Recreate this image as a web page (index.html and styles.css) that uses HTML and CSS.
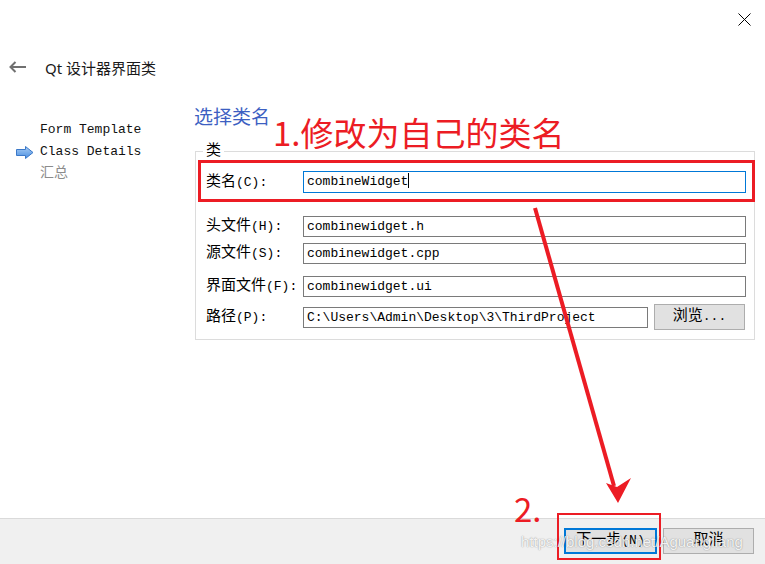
FILE: index.html
```html
<!DOCTYPE html>
<html lang="zh-CN">
<head>
<meta charset="utf-8">
<title>Qt 设计器界面类</title>
<link rel="stylesheet" href="styles.css">
</head>
<body>
<div class="dialog">
  <div class="topbar">
    <svg class="close" width="13" height="13" viewBox="0 0 13 13"><path d="M0.5 0.5L12.5 12.5M12.5 0.5L0.5 12.5" stroke="#000" stroke-width="1" fill="none"/></svg>
  </div>
  <div class="titlebar">
    <svg class="back" width="17" height="12" viewBox="0 0 17 12"><path d="M1.5 6H17M6.5 1L1.5 6L6.5 11" stroke="#707070" stroke-width="2" fill="none"/></svg>
    <span class="title">Qt 设计器界面类</span>
  </div>
  <div class="main">
    <ul class="nav">
      <li class="nav-item">Form Template</li>
      <li class="nav-item current">
        <svg class="cur-arrow" width="18" height="13" viewBox="0 0 18 13">
          <defs><linearGradient id="g" x1="0" y1="0" x2="0" y2="1"><stop offset="0" stop-color="#a9cdf5"/><stop offset="1" stop-color="#4b8fe0"/></linearGradient></defs>
          <path d="M0.5 3.5H9.5V0.5L17 6.5L9.5 12.5V9.5H0.5Z" fill="url(#g)" stroke="#3b78c8" stroke-width="1"/>
        </svg>Class Details</li>
      <li class="nav-item pending"><span class="zh">汇总</span></li>
    </ul>
    <section class="panel">
      <h2 class="heading">选择类名</h2>
      <fieldset class="group">
        <legend class="legend"><span class="zh">类</span></legend>
        <div class="row row-1">
          <label class="lbl"><span class="zh">类名</span>(C):</label>
          <div class="field field-active">combineWidget<span class="caret"></span></div>
        </div>
        <div class="row row-2">
          <label class="lbl"><span class="zh">头文件</span>(H):</label>
          <div class="field">combinewidget.h</div>
        </div>
        <div class="row row-3">
          <label class="lbl"><span class="zh">源文件</span>(S):</label>
          <div class="field">combinewidget.cpp</div>
        </div>
        <div class="row row-4">
          <label class="lbl"><span class="zh">界面文件</span>(F):</label>
          <div class="field">combinewidget.ui</div>
        </div>
        <div class="row row-5">
          <label class="lbl"><span class="zh">路径</span>(P):</label>
          <div class="field field-path">C:\Users\Admin\Desktop\3\ThirdProject</div>
          <button class="btn btn-browse"><span class="zh">浏览</span>...</button>
        </div>
      </fieldset>
    </section>
  </div>
  <div class="footer">
    <button class="btn btn-default"><span class="zh">下一步</span>(N)</button>
    <button class="btn btn-cancel"><span class="zh">取消</span></button>
  </div>

  <div class="mark mark-box1"></div>
  <div class="mark mark-box2"></div>
  <div class="note note-1">1.修改为自己的类名</div>
  <div class="note note-2">2.</div>
  <svg class="arrow" width="765" height="564" viewBox="0 0 765 564">
    <path d="M535 208L614 486" stroke="#ec1c24" stroke-width="4" fill="none"/>
    <path d="M618 503L606 483L617 487L631 478Z" fill="#ec1c24"/>
  </svg>
  <div class="watermark">https://blog.csdn.net/Aguangliang</div>
</div>
</body>
</html>
```

FILE: styles.css
```css
* { box-sizing: border-box; }
html, body { margin: 0; padding: 0; background: #fff; }
body { width: 765px; height: 564px; overflow: hidden; }

.dialog {
  position: relative;
  width: 765px;
  height: 564px;
  display: flex;
  flex-direction: column;
  background: #fff;
  font-family: "Liberation Mono", "Noto Sans CJK SC", monospace;
  font-size: 13px;
  color: #000;
}

.zh { font-family: "Noto Sans CJK SC", sans-serif; font-size: 15px; line-height: 1; }

.topbar {
  height: 40px;
  display: flex;
  justify-content: flex-end;
  align-items: flex-start;
  padding: 13px 14px 0 0;
}

.titlebar {
  height: 54px;
  display: flex;
  align-items: center;
  padding-left: 9px;
}
.back { margin-right: 19px; }
.title {
  font-family: "Noto Sans", "Noto Sans CJK SC", sans-serif;
  font-size: 15px;
  color: #1a1a1a;
}

.main {
  flex: 1;
  display: flex;
}

.nav {
  list-style: none;
  margin: 25px 0 0 0;
  padding: 0;
  width: 194px;
}
.nav-item {
  height: 22px;
  line-height: 22px;
  padding-left: 40px;
  position: relative;
  white-space: nowrap;
  color: #111;
}
.cur-arrow { position: absolute; left: 16px; top: 5px; }
.pending { color: #8c8c8c; }
.pending .zh { font-size: 14px; }

.panel { width: 561px; }
.heading {
  margin: 10px 0 0 0;
  font-family: "Noto Sans CJK SC", sans-serif;
  font-weight: normal;
  font-size: 19px;
  line-height: 24px;
  color: #3d5fc2;
}

.group {
  margin: 13px 0 0 1px;
  padding: 0 8px 9px 10px;
  border: 1px solid #dcdcdc;
  min-width: 0;
}
.legend {
  padding: 0 3px;
  margin-left: -3px;
  line-height: 18px;
}

.row {
  display: flex;
  align-items: center;
  height: 21px;
}
.row-1 { margin-top: 10px; height: 22px; }
.row-2 { margin-top: 23px; }
.row-3 { margin-top: 6px; }
.row-4 { margin-top: 12px; }
.row-5 { margin-top: 7px; height: 26px; }

.lbl {
  width: 97px;
  white-space: nowrap;
  line-height: 21px;
  height: 21px;
}

.field {
  width: 443px;
  height: 21px;
  border: 1px solid #7a7a7a;
  padding-left: 3px;
  line-height: 19px;
  white-space: nowrap;
  overflow: hidden;
}
.field-active { height: 22px; border-color: #0078d7; line-height: 20px; }
.caret {
  display: inline-block;
  width: 1px;
  height: 15px;
  background: #000;
  vertical-align: -3px;
}
.field-path { width: 345px; }

.btn {
  font-family: "Liberation Mono", "Noto Sans CJK SC", monospace;
  font-size: 13px;
  color: #000;
  background: #e1e1e1;
  border: 1px solid #adadad;
  height: 26px;
  padding: 0;
  line-height: 24px;
}
.btn-browse { width: 91px; margin-left: 6px; }

.footer {
  height: 46px;
  background: #f0f0f0;
  border-top: 1px solid #dadada;
  display: flex;
  justify-content: flex-end;
  align-items: flex-start;
  gap: 6px;
  padding: 9px 11px 0 0;
}
.btn-default { width: 93px; border: 2px solid #0078d7; line-height: 22px; }
.btn-cancel { width: 91px; }

/* annotations drawn over the screenshot */
.mark { position: absolute; border: 3px solid #ec1c24; pointer-events: none; }
.mark-box1 { left: 198px; top: 160px; width: 557px; height: 42px; }
.mark-box2 { left: 557px; top: 513px; width: 104px; height: 47px; border-width: 2px; }

.note {
  position: absolute;
  font-family: "Noto Sans CJK SC", sans-serif;
  color: #ec1c24;
  line-height: 1;
  white-space: nowrap;
}
.note-1 { left: 273px; top: 116px; font-size: 33px; }
.note-2 { left: 514px; top: 492px; font-size: 33px; }

.arrow { position: absolute; left: 0; top: 0; pointer-events: none; }

.watermark {
  position: absolute;
  left: 521px;
  top: 533px;
  font-family: "Liberation Sans", sans-serif;
  font-size: 15px;
  color: rgba(255, 255, 255, 0.9);
  text-shadow: 0 0 1px rgba(0, 0, 0, 0.35), 0 0 2px rgba(0, 0, 0, 0.15);
  white-space: nowrap;
  pointer-events: none;
}
```
